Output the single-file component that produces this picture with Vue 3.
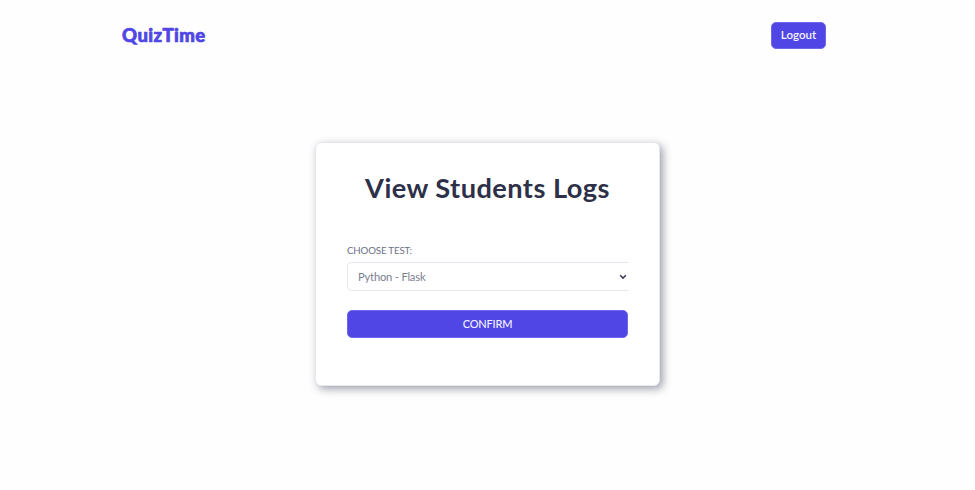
<script setup>
import { ref } from 'vue'

const tests = ['Python - Flask']
const selected = ref(tests[0])
</script>

<template>
  <div class="page">
    <header class="header">
      <a class="logo">QuizTime</a>
      <button class="btn logout" type="button">Logout</button>
    </header>
    <main class="card">
      <h1 class="title">View Students Logs</h1>
      <form class="form" @submit.prevent>
        <label class="label" for="test">CHOOSE TEST:</label>
        <div class="field">
          <select id="test" v-model="selected" class="select">
            <option v-for="test in tests" :key="test" :value="test">{{ test }}</option>
          </select>
          <svg class="chevron" viewBox="0 0 8 6" aria-hidden="true">
            <path d="M1.2 1.3 4 4.1 6.8 1.3" />
          </svg>
        </div>
        <button class="btn confirm" type="submit">CONFIRM</button>
      </form>
    </main>
  </div>
</template>

<style>
body {
  margin: 0;
  background: #fefefe;
}
</style>

<style scoped>
.page {
  box-sizing: border-box;
  height: 490px;
  overflow: hidden;
  font-family: Lato, "Open Sans", sans-serif;
}
.header {
  display: flex;
  align-items: center;
  justify-content: space-between;
  height: 71px;
  padding: 0 149px 0 122px;
}
.logo {
  color: #5046e5;
  font-size: 18.5px;
  font-weight: 900;
  line-height: 25px;
  letter-spacing: 0.4px;
  font-kerning: none;
  -webkit-text-stroke: 0.7px #5046e5;
}
.btn {
  box-sizing: border-box;
  padding: 0 0 2px;
  border: 1px solid #6f67e9;
  border-radius: 5px;
  background: #5046e5;
  color: #f4f3ff;
  font-family: inherit;
}
.logout {
  width: 55px;
  height: 27px;
  font-size: 11.5px;
  font-weight: 600;
}
.card {
  box-sizing: border-box;
  width: 345px;
  height: 244px;
  margin: 71px auto 0;
  padding: 27px 31px 0;
  border: 1px solid #e5e7ef;
  border-radius: 6px;
  background: #fff;
  box-shadow: 3px 3px 8px rgba(45, 48, 72, 0.45);
}
.title {
  margin: 0 -20px;
  color: #2d3048;
  font-size: 27.2px;
  font-weight: 700;
  line-height: 36px;
  letter-spacing: 0.45px;
  text-align: center;
  white-space: nowrap;
}
.form {
  display: flex;
  flex-direction: column;
  padding-top: 37px;
}
.label {
  color: #6b7083;
  font-size: 9.7px;
  line-height: 14px;
  letter-spacing: -0.15px;
}
.field {
  display: grid;
  align-items: center;
  height: 29px;
  margin: 5px 0 19px;
}
.select {
  grid-area: 1 / 1;
  box-sizing: border-box;
  width: 100%;
  height: 29px;
  padding: 0 10px;
  border: 1px solid #e5e7ef;
  border-right: 0;
  border-radius: 5px 0 0 5px;
  appearance: none;
  background: #fff;
  color: #7b8091;
  font-family: inherit;
  font-size: 11.2px;
  letter-spacing: -0.2px;
}
.chevron {
  grid-area: 1 / 1;
  justify-self: end;
  width: 8px;
  height: 6px;
  margin-right: 1px;
  fill: none;
  stroke: #3b3a55;
  stroke-width: 1.5;
  pointer-events: none;
}
.confirm {
  width: 100%;
  height: 28px;
  font-size: 11px;
  font-weight: 500;
  letter-spacing: -0.2px;
}
</style>
